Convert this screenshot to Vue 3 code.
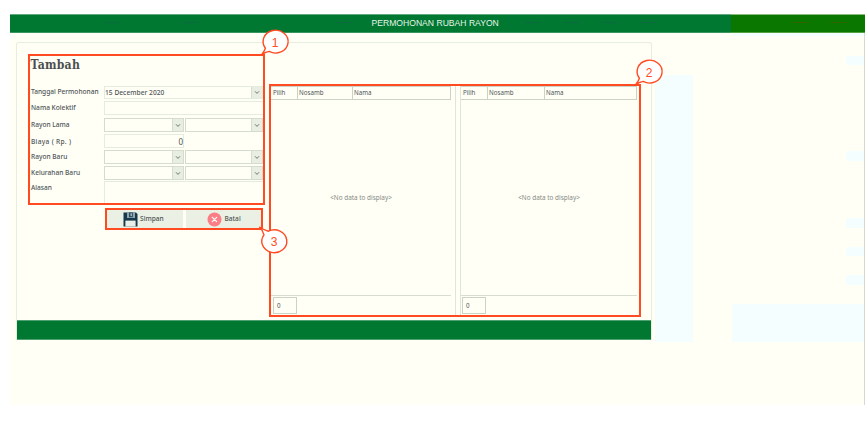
<script setup>
const rows = [
  { label: 'Tanggal Permohonan', kind: 'date', value: '15 December 2020' },
  { label: 'Nama Kolektif', kind: 'text' },
  { label: 'Rayon Lama', kind: 'pair' },
  { label: 'Biaya ( Rp. )', kind: 'number', value: '0' },
  { label: 'Rayon Baru', kind: 'pair' },
  { label: 'Kelurahan Baru', kind: 'pair' },
  { label: 'Alasan', kind: 'area' },
]
const tables = ['left', 'right']
const bubbleBelow = 'M4.4 19.2A12.5 11.4 0 1 1 8.2 22.4Q4 23 0.4 26Q3.2 22.8 4.4 19.2Z'
const bubbleAbove = 'M4 6.8A12.5 11.4 0 1 0 8.4 3.2Q4 2 -0.6 -1Q3 2.6 4 6.8Z'
const callouts = [
  { n: 1, shape: bubbleBelow },
  { n: 2, shape: bubbleBelow },
  { n: 3, shape: bubbleAbove },
]
const ticks = [104, 182, 334, 525, 563, 602, 640]
</script>

<template>
  <div class="app">
    <header class="topbar">
      <div class="topbar-main"><span class="topbar-title">PERMOHONAN RUBAH RAYON</span></div>
      <div class="topbar-side"></div>
      <svg class="ticks" width="855" height="19" viewBox="10 14 855 19">
        <path v-for="x in ticks" :key="x" :d="`M${x} 22.5h16`" stroke="#0b6a40" />
        <path d="M793 22.5h16M831 22.5h16" stroke="#316500" />
      </svg>
    </header>

    <main class="panel">
      <div class="content">
        <div class="left">
          <section class="form">
            <h1><span>Tambah</span></h1>
            <div v-for="r in rows" :key="r.label" class="row" :class="r.kind">
              <label><span>{{ r.label }}</span></label>
              <template v-if="r.kind === 'pair'">
                <div v-for="n in 2" :key="n" class="select">
                  <i><svg viewBox="0 0 6 5"><path d="M1 1.3 3 3.4 5 1.3" /></svg></i>
                </div>
              </template>
              <div v-else-if="r.kind === 'date'" class="select wide">
                <span>{{ r.value }}</span>
                <i><svg viewBox="0 0 6 5"><path d="M1 1.3 3 3.4 5 1.3" /></svg></i>
              </div>
              <div v-else class="input"><span>{{ r.value }}</span></div>
            </div>
          </section>
          <div class="actions">
            <button>
              <svg class="save" viewBox="0 0 15 15">
                <path d="M0.5 0.5H13L14.5 2V14.5H0.5Z" fill="#17394b" />
                <path d="M4 0.5H12V6H4Z" fill="#8fa6ae" />
                <path d="M6.2 0.5H9.7V5.2H6.2Z" fill="#17394b" />
                <path d="M7.5 1.2H8.8V4.2H7.5Z" fill="#c6d2d3" />
                <path d="M2.4 8.6H12.6V14.5H2.4Z" fill="#e8efe6" />
              </svg>
              <span>Simpan</span>
            </button>
            <button>
              <svg class="cancel" viewBox="0 0 15 15">
                <circle cx="7.5" cy="7.5" r="7" fill="#fb7e87" />
                <path d="M5.3 5.3 9.7 9.7M9.7 5.3 5.3 9.7" stroke="#fff" stroke-width="1.2" stroke-linecap="round" />
              </svg>
              <span>Batal</span>
            </button>
          </div>
        </div>

        <section class="tables">
          <div v-for="t in tables" :key="t" class="table" :class="t">
            <div class="thead"><span>Pilih</span><span>Nosamb</span><span>Nama</span></div>
            <div class="tbody"><span>&lt;No data to display&gt;</span></div>
            <div class="tfoot"><span>0</span></div>
          </div>
        </section>
      </div>
      <footer class="bottombar"></footer>
    </main>

    <svg v-for="c in callouts" :key="c.n" class="callout" :class="`c${c.n}`" viewBox="0 0 28 28">
      <path :d="c.shape" />
      <text x="14" y="17.5" text-anchor="middle">{{ c.n }}</text>
    </svg>
  </div>
</template>

<style>
body {
  background: #fff;
}
</style>

<style scoped>
* {
  box-sizing: border-box;
}
.app {
  position: relative;
  width: 855px;
  height: 391px;
  margin: 14px 0 0 10px;
  border-right: 1px solid #d5d9d0;
  color: #4f5557;
  font: 500 6.6px/8px 'Noto Sans', sans-serif;
  --b: linear-gradient(#f5feff, #f5feff);
  background:
    var(--b) 645px 61px / 38px 267px no-repeat,
    var(--b) 722px 290px / 133px 38px no-repeat,
    var(--b) 722px 19px / 133px 3px no-repeat,
    var(--b) 836px 42px / 19px 9px no-repeat,
    var(--b) 836px 137px / 19px 10px no-repeat,
    var(--b) 836px 204px / 19px 10px no-repeat,
    var(--b) 836px 233px / 19px 9px no-repeat,
    var(--b) 836px 261px / 19px 10px no-repeat,
    #fffff6;
}
.topbar {
  position: relative;
  display: flex;
  width: 855px;
  height: 19px;
}
.topbar-main {
  width: 721px;
  background: #007831;
  border-top: 1px solid #62a982;
  border-bottom: 1px solid #3a9660;
  padding-left: 361.5px;
}
.topbar-side {
  flex: 1;
  background: #0a7800;
  border-top: 1px solid #8dbb79;
  border-bottom: 1px solid #55a040;
}
.topbar-title {
  display: block;
  white-space: nowrap;
  color: #e6f5e9;
  font: 8.6px/16px 'Liberation Sans', sans-serif;
}
.ticks {
  position: absolute;
  inset: 0;
}
.panel {
  width: 636px;
  height: 298px;
  margin: 9px 0 0 6px;
  border: 1px solid #e6ede1;
  border-bottom: 0;
  border-radius: 3px 3px 0 0;
  display: flex;
  flex-direction: column;
}
.content {
  flex: 1;
  display: flex;
  align-items: flex-start;
  gap: 4px;
  padding: 11px 0 0 11px;
}
.left {
  width: 237px;
}
.form {
  height: 151px;
  border: 2px solid #ff4a22;
  display: grid;
  grid-template-rows: 30px 15px 17px 16px 16px 16px 15px 22px;
}
h1 {
  margin: 0;
  padding-left: 0.5px;
  font: bold 12.1px/18px 'DejaVu Serif Condensed', 'DejaVu Serif', serif;
  font-stretch: condensed;
  letter-spacing: 0.25px;
  color: #4c4f4f;
}
.row {
  display: grid;
  grid-template-columns: 73px 80px 1fr;
  column-gap: 1px;
  align-items: start;
}
label {
  padding: 3px 0 0 1px;
  white-space: nowrap;
}
.select,
.input {
  height: 14px;
  border: 1px solid #d3dccd;
  display: flex;
}
.select {
  justify-content: flex-end;
}
.select i {
  width: 11px;
  background: #e9eee3;
  border-left: 1px solid #d5ddcf;
  display: flex;
  align-items: center;
  justify-content: center;
}
.select svg {
  width: 6px;
  height: 5px;
  fill: none;
  stroke: #6d7570;
}
.wide {
  grid-column: 2 / 4;
  height: 13px;
  border-color: #e4ebdf;
  justify-content: space-between;
}
.wide > span {
  padding: 2px 0 0;
  letter-spacing: 0.05px;
}
.text .input,
.area .input {
  grid-column: 2 / 4;
  border-color: #e4ebdf;
  border-right: 0;
}
.area .input {
  height: 22px;
  border-bottom: 0;
}
.number .input {
  width: 80px;
  border-color: #e4ebdf;
  justify-content: flex-end;
  font-size: 8px;
  line-height: 13px;
  font-weight: 400;
}
.number label {
  letter-spacing: 0.3px;
  padding-top: 4px;
}
.date label {
  padding-top: 2px;
}
.actions {
  display: grid;
  grid-template-columns: 1fr 1fr;
  gap: 3px;
  width: 158px;
  height: 22px;
  margin: 3px 0 0 77px;
  border: 2px solid #ff4a22;
  background: #fffff6;
}
button {
  display: flex;
  align-items: center;
  gap: 2px;
  padding: 0 0 0 16px;
  border: 0;
  background: #eaf0e4;
  color: inherit;
  font: inherit;
}
button + button {
  padding-left: 21px;
  gap: 3px;
}
button svg {
  width: 15px;
  height: 15px;
}
.tables {
  width: 372px;
  height: 233px;
  margin-top: 30px;
  border: 2px solid #ff4a22;
  display: grid;
  grid-template-columns: 185px 177px;
  column-gap: 4px;
}
.table {
  display: grid;
  grid-template-rows: 14px 1fr 20px;
  font-weight: 400;
}
.table.left {
  width: 185px;
  border-right: 1px solid #dfe5da;
  padding-right: 4px;
}
.table.right {
  border-left: 1px solid #dfe5da;
}
.thead {
  display: grid;
  grid-template-columns: 26px 55px 1fr;
  border: 1px solid #cbd3c7;
  border-left: 0;
  font-size: 6.2px;
  line-height: 12px;
}
.right .thead {
  grid-template-columns: 26px 57px 1fr;
}
.thead span {
  padding-left: 1px;
}
.thead span:first-child {
  padding-left: 2px;
}
.thead span + span {
  border-left: 1px solid #cbd3c7;
}
.tbody {
  display: flex;
  align-items: center;
  justify-content: center;
  color: #858a85;
  font-size: 6.4px;
}
.tfoot {
  border-top: 1px solid #d6ddd1;
  padding: 1px 0 0 2px;
}
.right .tfoot {
  padding-left: 1px;
}
.tfoot span {
  display: block;
  width: 24px;
  height: 17px;
  border: 1px solid #cbd3c7;
  padding-left: 3px;
  font-size: 6.2px;
  line-height: 15px;
}
.bottombar {
  width: 634px;
  height: 20px;
  background: #007831;
  border-top: 1px solid #4ca172;
  border-bottom: 1px solid #4ca172;
}
.callout {
  position: absolute;
  width: 28px;
  height: 28px;
  overflow: visible;
}
.callout path {
  fill: #fff;
  stroke: #ff4a22;
  stroke-width: 1.4;
}
.callout text {
  font: 12px 'Liberation Sans', sans-serif;
  fill: #ff4a22;
}
.c1 {
  left: 251px;
  top: 15px;
}
.c2 {
  left: 625px;
  top: 45px;
}
.c3 {
  left: 250px;
  top: 213.5px;
}
</style>
